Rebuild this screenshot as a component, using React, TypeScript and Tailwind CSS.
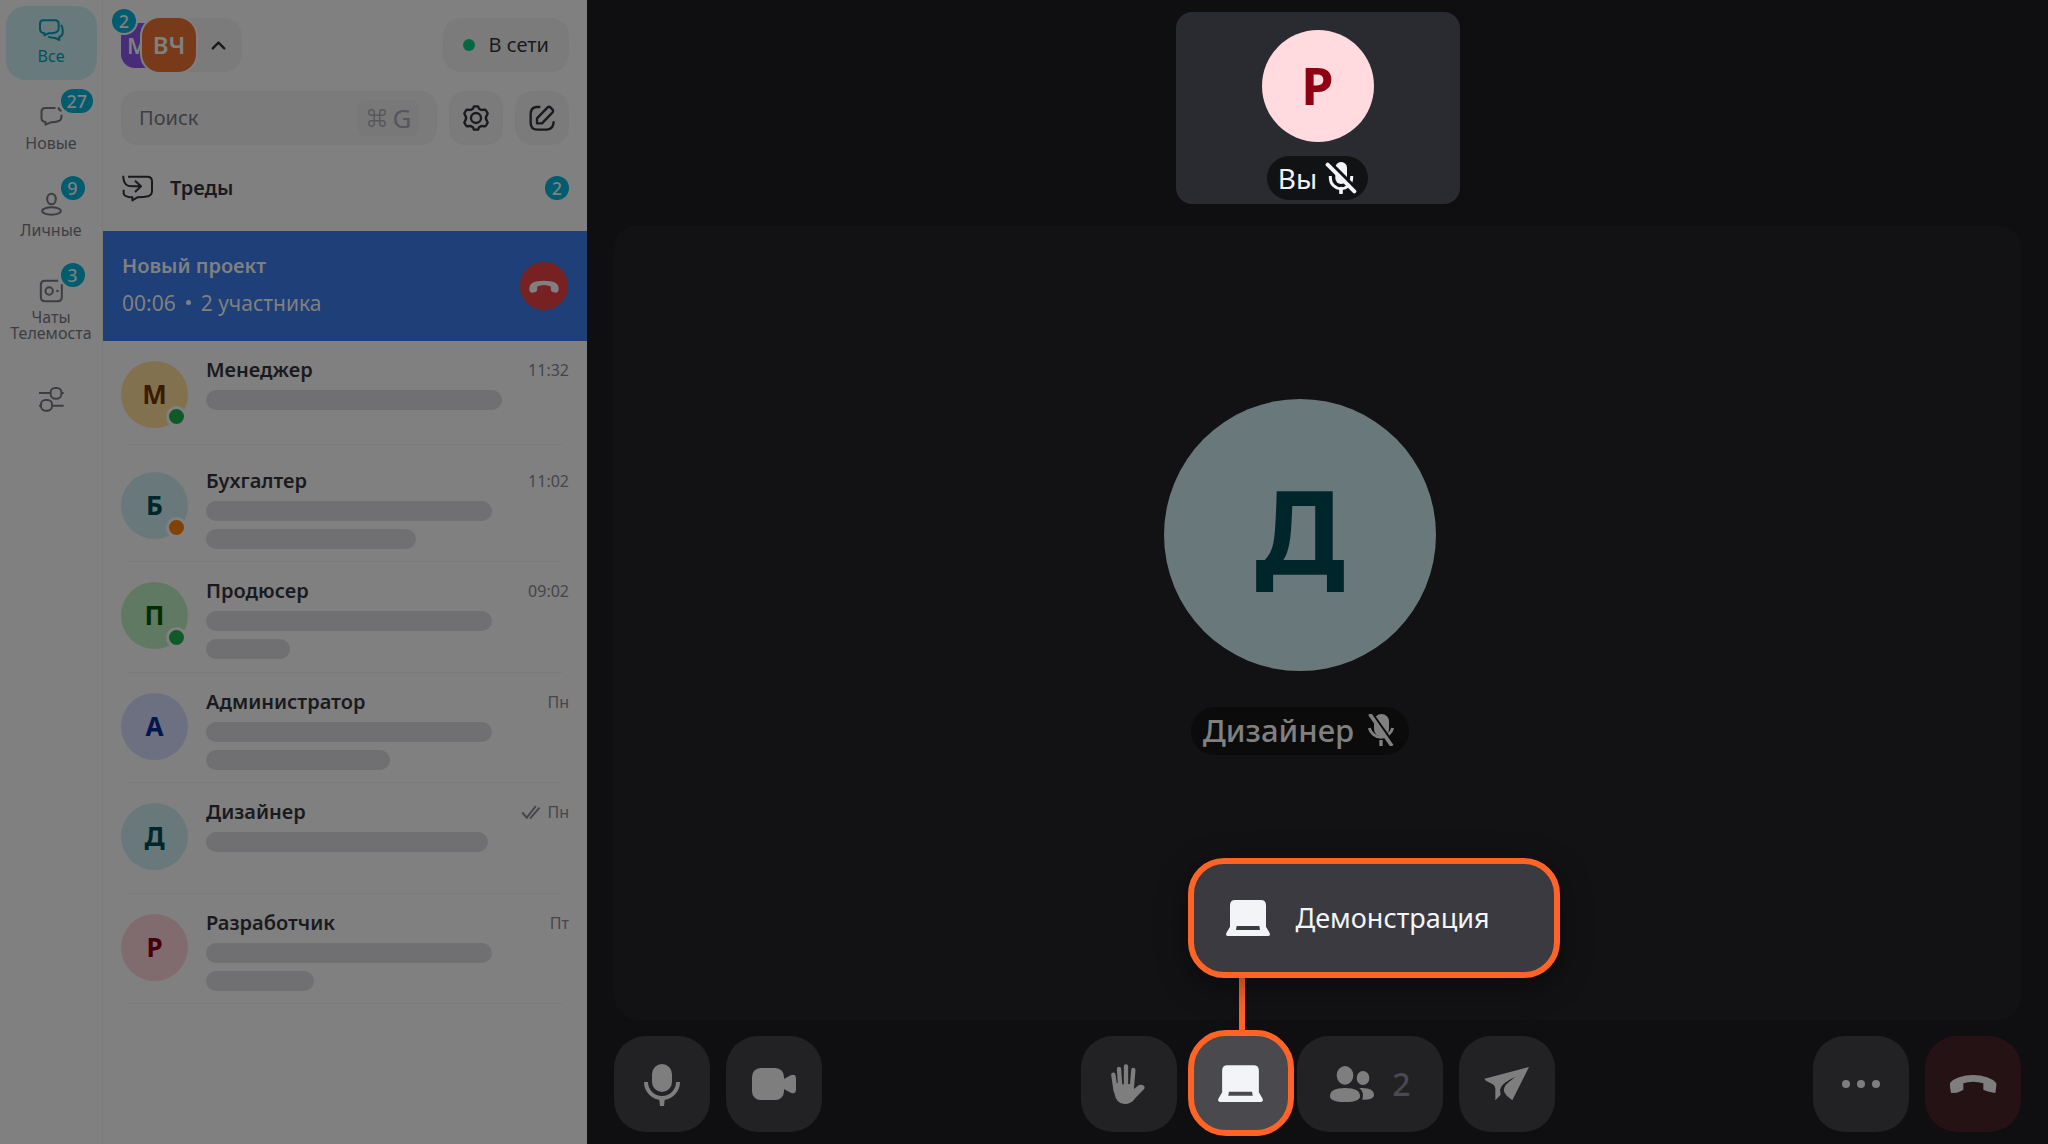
import { ReactNode } from "react";
import { ChevronUp, Command } from "lucide-react";
import clsx from "clsx";

type IconProps = { className?: string };

const ChatsIcon = ({ className }: IconProps) => (
  <svg viewBox="0 0 75 72" fill="none" stroke="currentColor" strokeWidth="6" strokeLinejoin="round" className={className}>
    <path d="M12 7H48Q59 7 59 18V30Q59 42 47 44Q38 46 28 46L16 52V46Q3 44 3 32V18Q3 7 12 7Z" />
    <path d="M66 21Q71 26 71 34V44Q71 54 61 56V66L49 60Q36 60 28 56" />
  </svg>
);

const NewIcon = ({ className }: IconProps) => (
  <svg viewBox="0 0 72 72" fill="none" stroke="currentColor" strokeWidth="6" strokeLinejoin="round" className={className}>
    <path d="M48 9H18Q6 9 6 21V40Q6 50 18 51V59L34 52Q48 52 58 48Q66 45 66 34V29" />
    <path d="M57 7Q57 16 66 18" />
  </svg>
);

const PersonIcon = ({ className }: IconProps) => (
  <svg viewBox="0 0 72 72" fill="none" stroke="currentColor" strokeWidth="6" className={className}>
    <ellipse cx="36" cy="21" rx="13" ry="16" />
    <ellipse cx="36" cy="57" rx="28" ry="11" />
  </svg>
);

const RoomIcon = ({ className }: IconProps) => (
  <svg viewBox="0 0 72 72" fill="none" stroke="currentColor" strokeWidth="6" className={className}>
    <path d="M56 5H17Q4 5 4 18V54Q4 67 17 67H54Q67 67 67 54V16" />
    <circle cx="29" cy="36" r="11" />
    <circle cx="54" cy="36" r="4" fill="currentColor" stroke="none" />
  </svg>
);

const FiltersIcon = ({ className }: IconProps) => (
  <svg viewBox="0 0 75 75" fill="none" stroke="currentColor" strokeWidth="6" className={className}>
    <path d="M0 18H35M68 18H74M0 56H6M39 56H74" />
    <rect x="35" y="3" width="32" height="32" rx="13" />
    <rect x="6" y="39" width="33" height="32" rx="13" />
  </svg>
);

const ThreadsIcon = ({ className }: IconProps) => (
  <svg viewBox="0 0 96 84" fill="none" stroke="currentColor" strokeWidth="6" strokeLinejoin="round" className={className}>
    <path d="M18 8H76Q90 8 90 22V50Q90 63 78 67Q66 70 46 70L31 79V70Q8 69 5 59V47" />
    <path d="M4 5V12Q6 37 30 37H56M39 20L57 37L39 54" />
  </svg>
);

const GearIcon = ({ className }: IconProps) => (
  <svg viewBox="0 0 78 78" fill="none" stroke="currentColor" strokeWidth="7" strokeLinejoin="round" className={className}>
    <path d="M33 4H45L48 11Q55 17 63 14L68 15L74 25L72 30Q65 39 72 48L74 53L68 63L63 64Q55 61 48 67L45 74H33L30 67Q23 61 15 64L10 63L4 53L6 48Q13 39 6 30L4 25L10 15L15 14Q23 17 30 11Z" />
    <circle cx="39" cy="39" r="15" />
  </svg>
);

const ComposeIcon = ({ className }: IconProps) => (
  <svg viewBox="0 0 78 78" fill="none" stroke="currentColor" strokeWidth="7" strokeLinejoin="round" className={className}>
    <path d="M34 6H22Q5 8 5 28V54Q5 74 26 74H54Q74 73 74 49" />
    <path d="M24 55V40L55 8Q60 3 65 8L70 13Q75 18 70 23L39 55Z" />
  </svg>
);

const HangUpIcon = ({ className }: IconProps) => (
  <svg viewBox="0 0 144 144" fill="currentColor" className={className}>
    <path d="M3 70Q8 60 30 52Q50 45 72 45Q94 45 114 52Q136 60 142 70V78L139 99Q126 98 114 94L103 89V70Q88 65 72 65Q56 65 43 70V89Q36 94 24 98L6 99L3 80Z" />
  </svg>
);

const HandsetIcon = ({ className }: IconProps) => (
  <svg viewBox="0 0 96 40" fill="currentColor" className={className}>
    <path d="M3 25Q3 2 48 2Q93 2 93 25V31Q92 40 83 39Q70 38 69 30V20Q60 15 48 15Q36 15 27 20V30Q26 38 14 39Q4 40 3 31Z" />
  </svg>
);

const DoubleCheckIcon = ({ className }: IconProps) => (
  <svg viewBox="0 0 60 46" fill="none" stroke="currentColor" strokeWidth="6" className={className}>
    <path d="M3 23L17 39L45 3M27 42L56 8" />
  </svg>
);

const MicIcon = ({ className }: IconProps) => (
  <svg viewBox="0 0 144 144" fill="currentColor" className={className}>
    <rect x="42" y="12" width="60" height="84" rx="30" />
    <path d="M24 66a48 48 0 0 0 96 0" fill="none" stroke="currentColor" strokeWidth="12" />
    <path d="M63 112h18l-3 26H66z" />
  </svg>
);

const CameraIcon = ({ className }: IconProps) => (
  <svg viewBox="0 0 144 144" fill="currentColor" className={className}>
    <rect x="6" y="24" width="96" height="96" rx="26" />
    <path d="M100 58L122 46Q138 40 138 56V88Q138 104 122 98L100 86Z" />
  </svg>
);

const HandIcon = ({ className }: IconProps) => (
  <svg viewBox="0 0 144 144" fill="currentColor" className={className}>
    <path
      d="M25 44L32 92M42 27L46 84M63 19V80M85 30L80 88"
      fill="none"
      stroke="currentColor"
      strokeWidth="13"
      strokeLinecap="round"
    />
    <path d="M23 66L28 100Q34 132 58 132Q80 132 91 114L118 86Q121 78 112 75Q104 73 98 78L86 88V70L60 74Z" />
  </svg>
);

const LaptopIcon = ({ className }: IconProps) => (
  <svg viewBox="0 0 144 144" fill="currentColor" fillRule="evenodd" className={className}>
    <path d="M34 18H110Q126 18 126 34V98L137 117Q140 126 132 126H12Q4 126 7 117L18 98V34Q18 18 34 18ZM38 96L36 108H108L106 96Z" />
  </svg>
);

const PeopleIcon = ({ className }: IconProps) => (
  <svg viewBox="0 0 144 144" fill="currentColor" className={className}>
    <ellipse cx="51" cy="46" rx="25" ry="28" />
    <path d="M51 84Q96 84 96 108Q96 126 51 126Q6 126 6 108Q6 84 51 84Z" />
    <ellipse cx="105" cy="54" rx="19" ry="21" />
    <path d="M94 84Q138 82 138 105Q138 120 103 119Q110 96 94 84Z" />
  </svg>
);

const SendIcon = ({ className }: IconProps) => (
  <svg viewBox="0 0 144 144" fill="currentColor" className={className}>
    <path d="M138 21L5 56Q4 59 10 63L28 72Q37 77 37 86V121L53 104L51 90Q53 78 66 68Q80 57 98 50Q76 66 68 75Q62 84 63 94Q64 100 72 108L88 121Z" />
  </svg>
);

const MoreIcon = ({ className }: IconProps) => (
  <svg viewBox="0 0 144 144" fill="currentColor" className={className}>
    <circle cx="27" cy="72" r="12" />
    <circle cx="72" cy="72" r="12" />
    <circle cx="117" cy="72" r="12" />
  </svg>
);

const MutedBoldIcon = ({ className }: IconProps) => (
  <svg viewBox="0 0 96 96" fill="none" stroke="currentColor" className={className}>
    <rect x="31" y="0" width="35" height="66" rx="17" fill="currentColor" stroke="none" />
    <path d="M16 42V48A32 32 0 0 0 80 48V42" strokeWidth="9" />
    <path d="M48 80V92" strokeWidth="11" strokeLinecap="round" />
    <path d="M16 2L96 82" stroke="#111214" strokeWidth="10" />
    <path d="M8 8L88 88" strokeWidth="12" strokeLinecap="round" />
  </svg>
);

const MutedIcon = ({ className }: IconProps) => (
  <svg viewBox="0 0 96 96" fill="none" stroke="currentColor" className={className}>
    <rect x="24" y="0" width="45" height="67" rx="22" fill="currentColor" stroke="none" />
    <path d="M10 42A36 36 0 0 0 80 42" strokeWidth="9" />
    <path d="M45 78V96" strokeWidth="10" />
    <path d="M20 0L88 96" stroke="#0b0b0c" strokeWidth="7" />
    <path d="M11 0L78 96" strokeWidth="11" />
  </svg>
);

const Badge = ({ children, className }: { children: ReactNode; className?: string }) => (
  <span
    className={clsx(
      "flex h-6 min-w-6 items-center justify-center rounded-full bg-[#005c6e] text-lg leading-6 font-medium text-[#808080]",
      className
    )}
  >
    {children}
  </span>
);

const folders = [
  { label: "Все", icon: ChatsIcon, active: true },
  { label: "Новые", icon: NewIcon, count: 27 },
  { label: "Личные", icon: PersonIcon, count: 9 },
  { label: "Чаты Телемоста", icon: RoomIcon, count: 3 },
];

const chats = [
  { name: "Менеджер", letter: "М", time: "11:32", avatar: "bg-[#81714f] text-[#3a1b00]", status: "bg-[#0f5a29]", lines: ["w-[296px]"] },
  { name: "Бухгалтер", letter: "Б", time: "11:02", avatar: "bg-[#69797b] text-[#00272c]", status: "bg-[#804207]", lines: ["w-[286px]", "w-[210px]"] },
  { name: "Продюсер", letter: "П", time: "09:02", avatar: "bg-[#607962] text-[#002d00]", status: "bg-[#0f5a29]", lines: ["w-[286px]", "w-[84px]"] },
  { name: "Администратор", letter: "А", time: "Пн", avatar: "bg-[#6c7080] text-[#00164c]", lines: ["w-[286px]", "w-[184px]"] },
  { name: "Дизайнер", letter: "Д", time: "Пн", read: true, avatar: "bg-[#69797b] text-[#00272c]", lines: ["w-[282px]"] },
  { name: "Разработчик", letter: "Р", time: "Пт", avatar: "bg-[#806c6f] text-[#470009]", lines: ["w-[286px]", "w-[108px]"] },
];

const Rail = () => (
  <nav aria-label="Папки" className="flex w-[103px] shrink-0 flex-col items-center gap-[13px] border-r border-[#7a7a7a] pt-[6px]">
    {folders.map(({ label, icon: Icon, count, active }) => (
      <button
        key={label}
        className={clsx(
          "relative flex min-h-[74px] w-[91px] flex-col items-center gap-[6px] rounded-[20px] pt-3",
          active ? "bg-[#697a7c] text-[#00525f]" : "text-[#3d3d43]"
        )}
      >
        <Icon className="h-6 w-[25px]" />
        <span className="text-base leading-4">{label}</span>
        {count && <Badge className="absolute -top-[4px] left-[55px] px-[6px]">{count}</Badge>}
      </button>
    ))}
    <button aria-label="Настроить папки" className="mt-4 flex h-[58px] w-[91px] items-center justify-center text-[#3d3d43]">
      <FiltersIcon className="size-[25px]" />
    </button>
  </nav>
);

const SidebarHeader = () => (
  <header className="px-[18px] pt-[18px]">
    <div className="flex justify-between">
      <button aria-label="Аккаунты" className="relative ml-[21px] flex h-[54px] w-[100px] items-center rounded-[18px] bg-[#7b7b7b]">
        <span className="absolute top-[5px] -left-[21px] flex h-[45px] w-[45px] items-center rounded-[14px] bg-[#472c7a] pl-[6px] text-[22px] font-semibold text-[#808080]">
          М
        </span>
        <span className="relative flex size-[54px] shrink-0 items-center justify-center rounded-[18px] bg-[#783a18] text-2xl font-semibold text-[#808080] ring-2 ring-[#808080]">
          ВЧ
        </span>
        <ChevronUp className="ml-[11px] size-[23px] text-[#1a1a1c]" strokeWidth={2.5} />
        <Badge className="absolute -top-[9px] -left-[30px] ring-2 ring-[#808080]">2</Badge>
      </button>
      <button className="flex h-[54px] items-center gap-[14px] rounded-[18px] bg-[#7b7b7b] px-5 text-xl text-[#1a1a1e]">
        <span className="size-3 rounded-full bg-[#066843]" />
        В сети
      </button>
    </div>
    <div className="mt-[19px] flex gap-3">
      <label className="flex h-[54px] min-w-0 flex-1 items-center rounded-2xl bg-[#7b7b7b] pr-[18px] pl-[18px]">
        <input
          type="search"
          aria-label="Поиск"
          placeholder="Поиск"
          className="min-w-0 flex-1 bg-transparent text-xl text-[#1a1a1e] outline-none placeholder:text-[#3d3d43]"
        />
        <kbd className="flex h-9 w-[61px] items-center justify-center gap-[5px] rounded-lg bg-[#787878] font-[inherit] text-[26px] text-[#56565c]">
          <Command className="size-[22px]" strokeWidth={1.5} />G
        </kbd>
      </label>
      <button aria-label="Настройки" className="flex size-[54px] items-center justify-center rounded-2xl bg-[#7b7b7b] text-[#1a1a1e]">
        <GearIcon className="size-[26px]" />
      </button>
      <button aria-label="Новый чат" className="flex size-[54px] items-center justify-center rounded-[18px] bg-[#7b7b7b] text-[#1a1a1e]">
        <ComposeIcon className="size-[26px]" />
      </button>
    </div>
    <button className="flex h-[86px] w-full items-center text-xl font-semibold text-[#1a1a1e]">
      <ThreadsIcon className="mr-4 ml-px h-7 w-8" />
      Треды
      <Badge className="ml-auto">2</Badge>
    </button>
  </header>
);

const ActiveCall = () => (
  <section className="flex h-[110px] items-center justify-between bg-[#1e3f78] px-[19px] text-[#808080]">
    <div className="flex flex-col gap-[9px] pb-1 leading-7">
      <h2 className="text-xl leading-7 font-semibold">Новый проект</h2>
      <p className="flex items-center gap-[10px] text-[21px] leading-7">
        00:06
        <span className="size-[5px] rounded-full bg-current" />2 участника
      </p>
    </div>
    <button aria-label="Завершить звонок" className="flex size-12 items-center justify-center rounded-full bg-[#782122]">
      <HandsetIcon className="h-[13px] w-8" />
    </button>
  </section>
);

const ChatList = () => (
  <ul className="grid h-[663px] auto-rows-fr">
    {chats.map((chat, index) => (
      <li key={chat.name} className={clsx("flex flex-col", index === 0 && "pb-[7px]")}>
        <a href="#chat" className="flex flex-1 gap-[18px] px-[18px] pt-[17px]">
          <span
            className={clsx(
              "relative mt-[3px] flex size-[67px] shrink-0 items-center justify-center rounded-full text-[26px] font-bold",
              chat.avatar
            )}
          >
            {chat.letter}
            {chat.status && (
              <span className={clsx("absolute right-px bottom-px size-[21px] rounded-full border-3 border-[#808080]", chat.status)} />
            )}
          </span>
          <span className="flex min-w-0 flex-1 flex-col gap-2">
            <span className="flex h-6 items-center">
              <span className="text-xl leading-6 font-semibold text-[#1a1a1e]">{chat.name}</span>
              <span className="ml-auto flex items-center gap-[6px] text-base leading-6 text-[#45454b]">
                {chat.read && <DoubleCheckIcon className="h-[15px] w-5" />}
                {chat.time}
              </span>
            </span>
            {chat.lines.map((width, i) => (
              <span key={i} className={clsx("h-5 rounded-full bg-[#707072]", width)} />
            ))}
          </span>
        </a>
        <hr className="mr-[25px] ml-6 border-[#7a7a7a]" />
      </li>
    ))}
  </ul>
);

const controlClass = "flex h-24 shrink-0 items-center justify-center rounded-[32px]";

const Control = ({ label, className, children }: { label: string; className: string; children: ReactNode }) => (
  <button aria-label={label} className={clsx(controlClass, className)}>
    {children}
  </button>
);

const ShareControl = () => (
  <div className="relative -my-[6px] -mr-[13px] -ml-[5px]">
    <button
      aria-label="Демонстрация экрана"
      className="flex size-[106px] items-center justify-center rounded-[38px] border-6 border-[#ff6426] bg-[#4a494d] text-[#f3f4f7]"
    >
      <LaptopIcon className="size-[49px]" />
    </button>
    <div className="absolute bottom-full left-[51px] h-[52px] w-[6px] bg-[#ff6426]" />
    <button className="absolute bottom-full left-0 mb-[52px] flex h-[120px] w-[372px] items-center gap-6 rounded-[36px] border-6 border-[#ff6426] bg-[#3a3a40] pl-[30px] text-[27px] text-[#f3f4f7] shadow-[0_8px_32px_rgba(0,0,0,0.4)]">
      <LaptopIcon className="size-12" />
      Демонстрация
    </button>
  </div>
);

const Call = () => (
  <main className="flex min-w-0 flex-1 flex-col bg-[#0f0f11] px-[27px] pt-3 pb-3">
    <div className="mx-auto flex h-[192px] w-[284px] flex-col items-center rounded-2xl bg-[#2a2b30] pt-[18px]">
      <span className="flex size-28 items-center justify-center rounded-full bg-[#ffdade] pb-[2px] text-[52px] font-bold text-[#8e0012]">Р</span>
      <span className="mt-[14px] flex h-11 items-center gap-2 rounded-full bg-[#111214] px-[11px] text-[28px] text-[#f3f4f7]">
        Вы
        <MutedBoldIcon className="size-8" />
      </span>
    </div>

    <section className="mt-[21px] flex flex-1 flex-col items-center rounded-[24px] bg-[#121214] pt-[174px] pr-[35px]">
      <span className="flex size-[272px] items-center justify-center rounded-full bg-[#69797b] pb-[10px] text-[116px] leading-none font-bold text-[#00262b]">
        Д
      </span>
      <span className="mt-9 flex h-12 items-center gap-3 rounded-full bg-[#0b0b0c] pr-[11px] pb-[2px] pl-3 text-[31px] font-medium text-[#808080]">
        Дизайнер
        <MutedIcon className="size-8" />
      </span>
    </section>

    <footer className="mt-4 grid grid-cols-[1fr_auto_1fr] text-[#7e7e7e]">
      <div className="flex gap-4">
        <Control label="Микрофон" className="w-24 bg-[#222224]">
          <MicIcon className="size-12" />
        </Control>
        <Control label="Камера" className="w-24 bg-[#222224]">
          <CameraIcon className="size-12" />
        </Control>
      </div>
      <div className="flex gap-4">
        <Control label="Поднять руку" className="w-24 bg-[#222224]">
          <HandIcon className="size-12" />
        </Control>
        <ShareControl />
        <Control label="Участники" className="w-[146px] gap-4 bg-[#222224]">
          <PeopleIcon className="size-12" />
          <span className="text-[32px] font-medium text-[#49494f]">2</span>
        </Control>
        <Control label="Чат" className="w-24 bg-[#222224]">
          <SendIcon className="size-12" />
        </Control>
      </div>
      <div className="flex justify-end gap-4">
        <Control label="Ещё" className="w-24 bg-[#222224]">
          <MoreIcon className="size-12" />
        </Control>
        <Control label="Завершить" className="w-24 bg-[#241214]">
          <HangUpIcon className="size-12" />
        </Control>
      </div>
    </footer>
  </main>
);

const App = () => {
  return (
    <div className="flex min-h-screen bg-[#808080] font-['Noto_Sans','Open_Sans',sans-serif]">
      <Rail />
      <aside className="flex w-[484px] shrink-0 flex-col">
        <SidebarHeader />
        <ActiveCall />
        <ChatList />
      </aside>
      <Call />
    </div>
  );
};

export default App;
